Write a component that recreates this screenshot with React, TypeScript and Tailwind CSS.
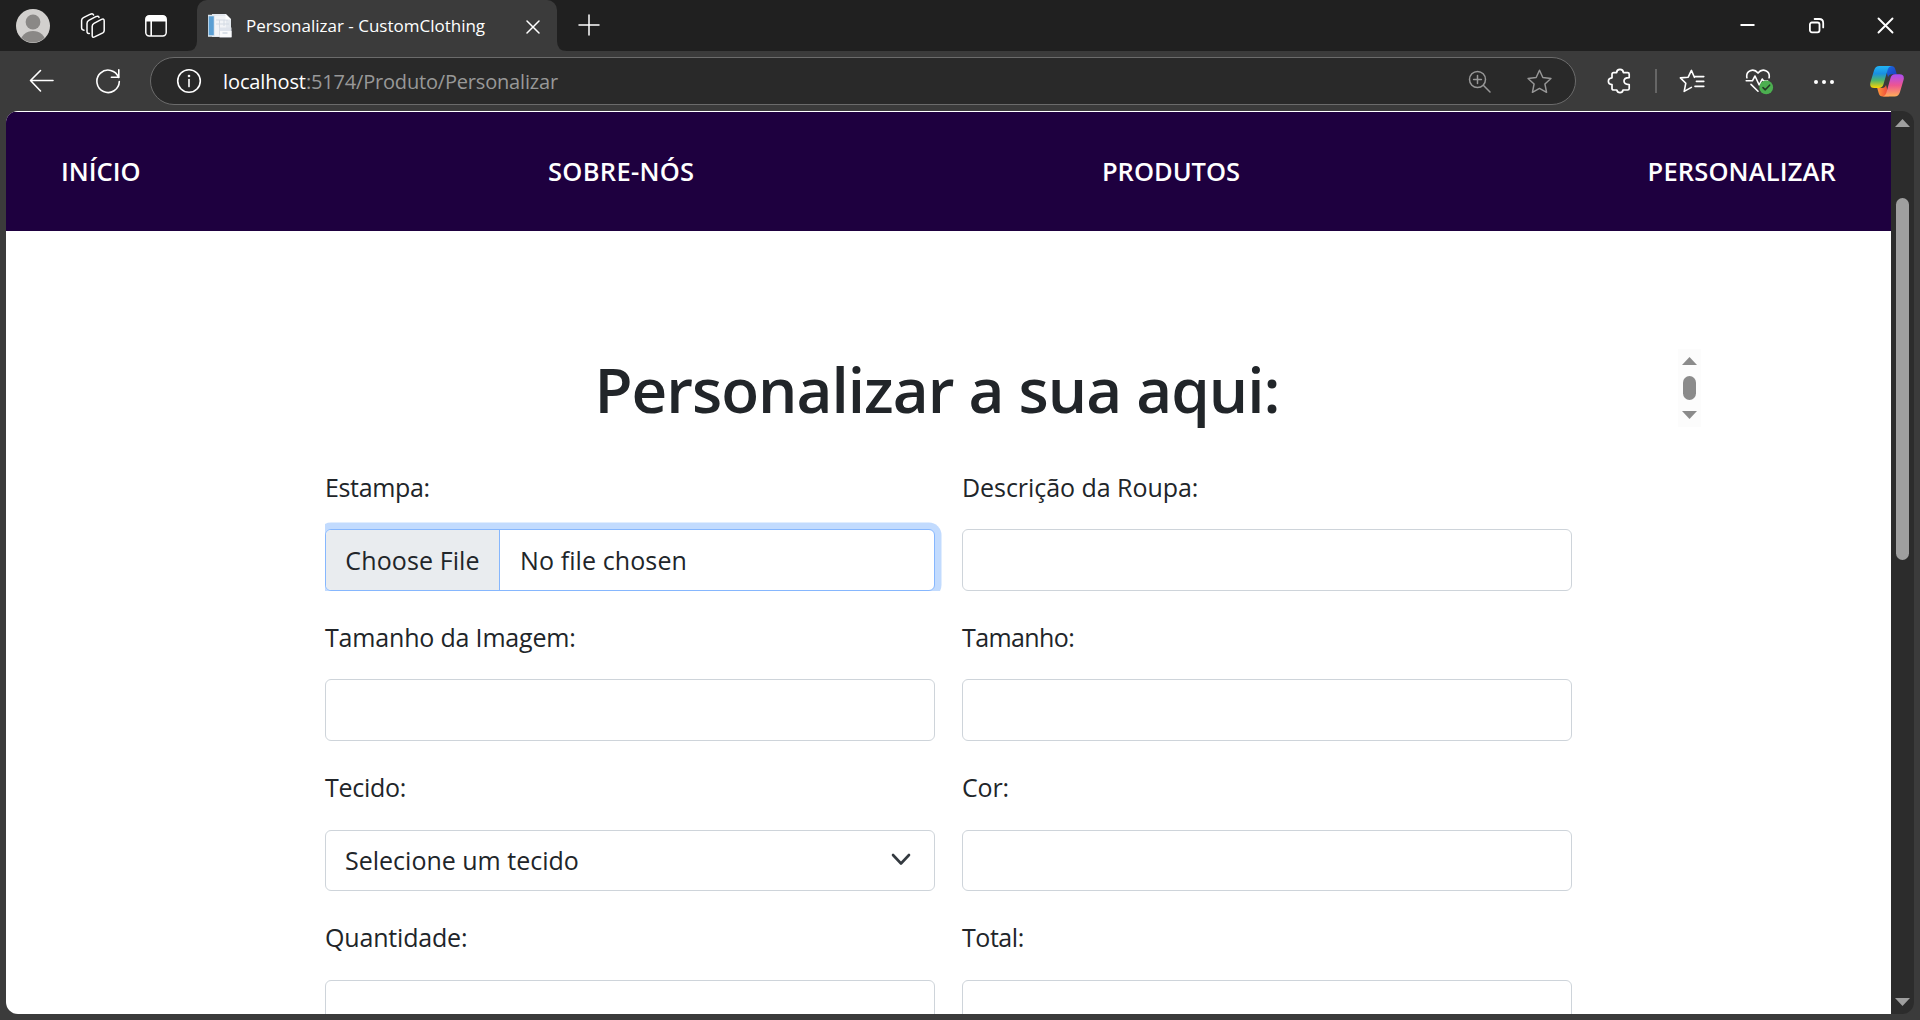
import type { ReactNode } from "react";

function Triangle({ dir, className }: { dir: "up" | "down"; className?: string }) {
  return (
    <svg width="15" height="8" viewBox="0 0 15 8" className={className} fill="currentColor">
      <path d={dir === "up" ? "M7.5 0 15 8H0z" : "M0 0h15L7.5 8z"} />
    </svg>
  );
}

function Line({ w = 24, h = 24, sw = 1.4, box, children, className }: { w?: number; h?: number; sw?: number; box?: string; children: ReactNode; className?: string }) {
  return (
    <svg width={w} height={h} viewBox={box ?? `0 0 ${w} ${h}`} fill="none" stroke="currentColor" strokeWidth={sw} strokeLinecap="round" strokeLinejoin="round" className={`shrink-0 ${className ?? ""}`}>
      {children}
    </svg>
  );
}

function TabStrip() {
  return (
    <div className="flex h-[51px] shrink-0 items-start bg-[#202020] text-white">
      <svg width="34" height="34" viewBox="0 0 34 34" className="mt-[9px] ml-4 shrink-0">
        <defs>
          <clipPath id="avatar"><circle cx="17" cy="17" r="16.5" /></clipPath>
        </defs>
        <circle cx="17" cy="17" r="17" fill="#d2d0ce" />
        <g fill="#8a8886" clipPath="url(#avatar)">
          <circle cx="17" cy="13" r="7.4" />
          <ellipse cx="17" cy="33" rx="12.5" ry="11" />
        </g>
      </svg>
      <Line w={26} h={26} className="mt-[13px] ml-[30px]" sw={1.5}>
        <path d="M14 10.3 21.5 6.4Q24.2 5.2 24.2 8V17.5Q24.2 19 22.8 19.8L14.6 23.9Q12.2 25 12.2 22.4V13.2Q12.2 11.2 14 10.3z" />
        <path d="M9.3 20.4Q7 20.8 7 18.6V10.4Q7 8.4 8.8 7.4L15.8 3.6Q18.4 2.4 19 4.4" />
        <path d="M4 17.2Q1.6 17 1.6 14.8V7.6Q1.6 5.6 3.4 4.6L10.4 1.2Q12.8 .2 13.6 2" />
      </Line>
      <svg width="22" height="22" viewBox="0 0 22 22" fill="none" className="mt-[15px] ml-[39px] shrink-0">
        <rect x=".8" y=".8" width="20.4" height="20.2" rx="3.4" stroke="#fff" strokeWidth="1.5" />
        <path d="M.8 4.2Q.8.8 4.2.8H17.8Q21.2.8 21.2 4.2V6.4H.8zM5.4 6h1.6v15H5.4z" fill="#fff" />
      </svg>
      <svg width="10" height="51" className="ml-5 shrink-0"><path d="M10 41V51H0Q10 51 10 41z" fill="#3b3b3b" /></svg>
      <div className="flex h-full w-[360px] shrink-0 items-center rounded-t-[10px] bg-[#3b3b3b] pl-[11px]">
        <svg width="24" height="24" viewBox="0 0 24 24" className="shrink-0">
          <path d="M4 0h14l5 5v18H4z" fill="#e4e9ef" />
          <path d="M0 1.5h6.5V22H0z" fill="#5b9fd3" stroke="#dfe7ee" strokeWidth="1.4" />
          <path d="M7 2h11v20H7z" fill="#f2f4f7" />
          <path d="M8 6h12M8 10h13M11.5 6v15M16 6v6" stroke="#d3dae3" strokeWidth="1" />
          <path d="M17.5 0v5.5H23z" fill="#fff" />
          <rect x="11.5" y="13.5" width="12" height="10" fill="#dfe4ec" />
          <path d="M12 17h11.5v6H12z" fill="#fafbfc" />
          <path d="M14.5 19h5" stroke="#bcc7d5" strokeWidth="1" />
        </svg>
        <span className="ml-[14px] text-[17px] leading-6 whitespace-nowrap">Personalizar - CustomClothing</span>
        <Line w={14} h={14} className="ml-auto mr-[17px] mt-[2px]" sw={1.5}><path d="M1 1l12 12M13 1 1 13" /></Line>
      </div>
      <svg width="10" height="51" className="shrink-0"><path d="M0 41V51H10Q0 51 0 41z" fill="#3b3b3b" /></svg>
      <Line w={22} h={22} className="mt-[14px] ml-[11px]" sw={1.5}><path d="M11 1v20M1 11h20" /></Line>
      <div className="mt-[17px] mr-[26px] ml-auto flex gap-[52px]">
        <Line w={17} h={17} sw={2}><path d="M1.5 8h14" strokeLinecap="butt" /></Line>
        <Line w={17} h={17} sw={1.8}>
          <rect x="1.9" y="5.5" width="9.6" height="9.8" rx="2" />
          <path d="M6.6 2h4.600Q15.2 2 15.2 6v4.400" />
        </Line>
        <Line w={17} h={17} sw={1.9}><path d="M1.5 1.5l14 14M15.5 1.5l-14 14" /></Line>
      </div>
    </div>
  );
}

const star = "M12 1.2 15.2 8.2 23 9.1 17.2 14.4 18.8 22.4 12 18.6 5.2 22.4 6.8 14.4 1 9.1 8.8 8.2z";

function Toolbar() {
  return (
    <div className="flex h-[60px] shrink-0 items-center bg-[#3b3b3b] text-white">
      <Line w={26} h={24} className="ml-[28px]" sw={1.6}><path d="M25 11.5H2.500M12.500 1.5 2.500 11.5 12.500 22" /></Line>
      <Line w={26} h={26} className="ml-[41px]" sw={1.6}>
        <path d="M23.6 9.4A11.2 11.2 0 1 0 24.3 13.6" />
        <path d="M23.8 1.8v7.400h-7.400" />
      </Line>
      <div className="ml-[29px] flex h-12 w-[1426px] items-center rounded-full border border-[#6b6b6b] bg-[#292929]">
        <Line w={26} h={26} className="ml-[25px]" sw={1.6}>
          <circle cx="13" cy="13" r="11.3" />
          <path d="M13 11.6v7" />
          <circle cx="13" cy="8" r=".5" />
        </Line>
        <div className="mt-px ml-[21px] text-[20px] leading-7 whitespace-nowrap text-[#989898]">
          <span className="font-medium tracking-[-0.1px] text-white">localhost</span>
          <span className="tracking-[-0.18px]">:5174/Produto/Personalizar</span>
        </div>
        <div className="mr-[23px] ml-auto flex items-center gap-9 text-[#979797]">
          <Line w={23} h={23} sw={1.5}>
            <circle cx="9.5" cy="9.5" r="8" />
            <path d="M15.3 15.3 22 22M5.6 9.5h7.8M9.5 5.6v7.8" />
          </Line>
          <Line w={25} h={25} box="0 0 24 24" sw={1.4}><path d={star} /></Line>
        </div>
      </div>
      <Line w={24} h={26} className="ml-[31px]" sw={1.7}>
        <path d="M6.6 4.6H9.6Q9.8 1.3 13 1.3T16.4 4.6H20.6Q22.2 4.6 22.2 6.2V9.6Q17 9.6 17 13T22.2 16.6V20.4Q22.2 22 20.6 22H16Q15.6 24.6 13 24.6T9.8 22H6.8Q5 22 5 20.4V16.6Q1.4 16.2 1.4 13.2T5 9.8V6.2Q5 4.6 6.6 4.6z" />
      </Line>
      <span className="ml-6 h-6 w-[2px] bg-[#666]" />
      <Line w={26} h={26} className="ml-[22px]" sw={1.6}>
        <path d="M15.4 9.3 12.4 2.4 9.2 9.2 1.4 9.9 6.8 15.2 5.2 23.4 12.4 19.4M16 8.6h8.8M17.4 13.4h7.4M16 18.4h8.8" />
      </Line>
      <svg width="30" height="28" viewBox="0 0 30 28" fill="none" stroke="#fff" strokeWidth="1.6" strokeLinejoin="round" strokeLinecap="round" className="mt-[2px] ml-10 shrink-0">
        <path d="M1.9 9.8C.6 3 8.4-.6 13 5.1 17.6-.6 25.4 3 24.1 9.8" />
        <path d="M1.2 12.8H7.400L10 8l4.200 9 3-6 1.400 2h4M6 16.400l7 6.800" />
        <circle cx="21.200" cy="19.4" r="6.900" fill="#4caf50" stroke="none" />
        <path d="m18 19.600 2.300 2.200 4.300-4.600" stroke="#243b26" />
      </svg>
      <svg width="20" height="6" viewBox="0 0 20 6" fill="#fff" className="mt-px ml-[39px] shrink-0">
        <circle cx="2" cy="3" r="2" /><circle cx="10" cy="3" r="2" /><circle cx="18" cy="3" r="2" />
      </svg>
      <svg width="34" height="31" viewBox="0 0 34 31" className="mr-4 ml-auto shrink-0">
        <defs>
          <linearGradient id="cpA" x1="0" y1="0" x2="0" y2="1">
            <stop offset="0" stopColor="#22b5f5" /><stop offset=".35" stopColor="#1a8fe0" /><stop offset=".65" stopColor="#4fb56c" /><stop offset="1" stopColor="#ffd400" />
          </linearGradient>
          <linearGradient id="cpB" x1="0" y1="0" x2="0" y2="1">
            <stop offset="0" stopColor="#a94df5" /><stop offset=".5" stopColor="#ee5591" /><stop offset="1" stopColor="#ffae58" />
          </linearGradient>
          <linearGradient id="cpC" x1="0" y1="0" x2="1" y2="1">
            <stop offset="0" stopColor="#1d6fe0" /><stop offset="1" stopColor="#1a3bc0" />
          </linearGradient>
          <linearGradient id="cpD" x1="0" y1="0" x2="1" y2="0">
            <stop offset="0" stopColor="#ff9a3c" /><stop offset="1" stopColor="#ee3d3a" />
          </linearGradient>
        </defs>
        <path d="M15 0h6.4q3 0 3.8 3l1.6 5.2H22q-3 0-4 3z" fill="url(#cpC)" />
        <path d="M19 30.5h-6.4q-3 0-3.8-3L7.2 22H12q3 0 4-3z" fill="url(#cpD)" />
        <path d="M9.4 0h12q-2.8.4-3.8 4l-4.2 14.6q-1 3.4-4.4 3.4H4.4Q-.8 22 .4 16.6L4 4.4Q5.400 0 9.400 0z" fill="url(#cpA)" />
        <path d="M24.600 30.500h-12q2.800-.4 3.800-4l4.200-14.800q1-3.500 4.400-3.500h4.600q5.200 0 4 5.600L30 26q-1.400 4.500-5.400 4.500z" fill="url(#cpB)" />
      </svg>
    </div>
  );
}

function Field({ label, tall = true, fit = "tracking-[-0.18px]", children }: { label: string; tall?: boolean; fit?: string; children?: ReactNode }) {
  return (
    <div className="flex h-[123px] flex-col justify-between">
      <div className={`h-[38px] ${fit}`}>{label}</div>
      {children ?? <div className={`rounded-md border border-[#ced4da] bg-white ${tall ? "h-[62px]" : "h-[61px]"}`} />}
    </div>
  );
}

function Page() {
  return (
    <main className="h-full min-w-0 flex-1 overflow-hidden bg-white pt-px text-[25px] leading-[38px] text-[#212529]">
      <nav className="flex h-[119px] items-center justify-between bg-[#1e003f] pr-[55px] pb-[2px] pl-[55px] text-[25.5px] font-semibold text-white">
        <span>INÍCIO</span>
        <span className="tracking-[0.3px]">SOBRE-NÓS</span>
        <span>PRODUTOS</span>
        <span className="tracking-[0.15px]">PERSONALIZAR</span>
      </nav>
      <div className="mx-auto mt-[118px] flex h-[78px] w-[1505px]">
        <h1 className="flex-1 pt-px text-center text-[62px] leading-[78px] font-semibold tracking-[-1px]">Personalizar a sua aqui:</h1>
        <div className="flex w-[23px] flex-col items-center bg-[#fcfcfc] pt-2 text-[#8b8b8b]">
          <Triangle dir="up" />
          <div className="my-[11px] h-6 w-[13px] rounded-full bg-[#8b8b8b]" />
          <Triangle dir="down" />
        </div>
      </div>
      <form className="mx-auto mt-[41px] grid w-[1247px] grid-cols-2 gap-x-[27px] gap-y-[27px]">
        <Field label="Estampa:" fit="tracking-[-0.35px]">
          <div className="[clip-path:inset(-10px_-10px_0_0)]">
            <div className="flex h-[62px] items-center overflow-hidden rounded-md border border-[#86b7fe] bg-white shadow-[0_0_0_6.5px_#c2dbfe]">
              <div className="flex h-full w-[174px] items-center justify-center border-r border-[#86b7fe] bg-[#e9ecef] tracking-[0.1px] whitespace-nowrap">Choose File</div>
              <span className="ml-5 tracking-[0.1px]">No file chosen</span>
            </div>
          </div>
        </Field>
        <Field label="Descrição da Roupa:" fit="tracking-[-0.05px]" />
        <Field label="Tamanho da Imagem:" />
        <Field label="Tamanho:" fit="tracking-[-0.6px]" />
        <Field label="Tecido:" fit="tracking-[-0.3px]">
          <div className="flex h-[61px] items-center justify-between rounded-md border border-[#ced4da] bg-white pr-[23px] pb-px pl-[19px]">
            <span>Selecione um tecido</span>
            <Line w={20} h={14} sw={2.6} className="text-[#343a40]"><path d="m2 2 8 8.500 8-8.500" /></Line>
          </div>
        </Field>
        <Field label="Cor:" tall={false} />
        <Field label="Quantidade:" tall={false} />
        <Field label="Total:" tall={false} fit="tracking-[-0.45px]" />
      </form>
    </main>
  );
}

export default function App() {
  return (
    <div className="flex h-[1020px] w-[1920px] flex-col overflow-hidden bg-[#3b3b3b] font-['Open_Sans',sans-serif]">
      <TabStrip />
      <Toolbar />
      <div className="mr-[6px] ml-[6px] flex h-[903px] overflow-hidden rounded-[12px]">
        <Page />
        <div className="flex w-[23px] shrink-0 flex-col items-center bg-[#2c2c2c] pt-2 pb-2 text-[#9f9f9f]">
          <Triangle dir="up" />
          <div className="mt-[71px] h-[362px] w-[13px] rounded-full bg-[#9f9f9f]" />
          <Triangle dir="down" className="mt-auto" />
        </div>
      </div>
    </div>
  );
}
